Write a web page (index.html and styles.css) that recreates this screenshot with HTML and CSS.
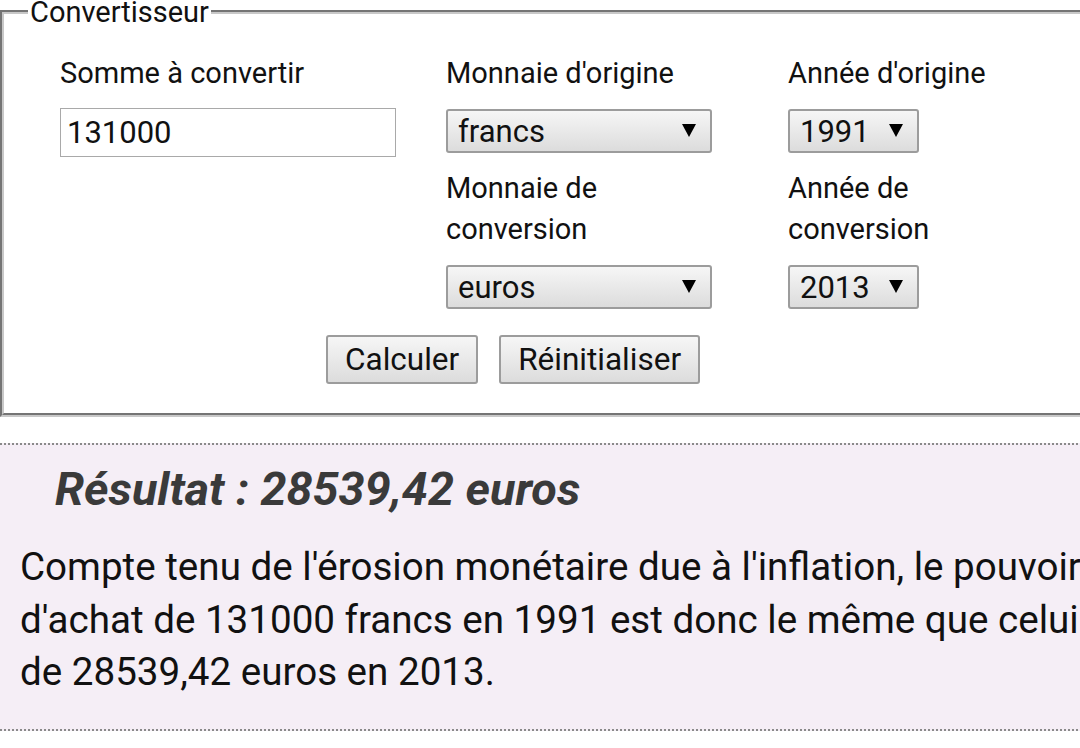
FILE: index.html
```html
<!DOCTYPE html>
<html lang="fr">
<head>
  <meta charset="UTF-8">
  <meta name="viewport" content="width=device-width, initial-scale=1.0">
  <title>Convertisseur</title>
  <link rel="stylesheet" href="styles.css">
</head>
<body>
  <div class="page">
    <form class="converter">
      <fieldset class="box">
        <legend>Convertisseur</legend>
        <div class="fields">
          <div class="col col-sum">
            <label for="somme">Somme à convertir</label>
            <input type="text" id="somme" value="131000">
          </div>
          <div class="col col-money">
            <label for="monnaieOrigine">Monnaie d'origine</label>
            <span class="select">
              <select id="monnaieOrigine">
                <option>francs</option>
                <option>euros</option>
              </select>
            </span>
            <label for="monnaieConversion">Monnaie de conversion</label>
            <span class="select">
              <select id="monnaieConversion">
                <option>euros</option>
                <option>francs</option>
              </select>
            </span>
          </div>
          <div class="col col-year">
            <label for="anneeOrigine">Année d'origine</label>
            <span class="select year">
              <select id="anneeOrigine">
                <option>1991</option>
              </select>
            </span>
            <label for="anneeConversion">Année de conversion</label>
            <span class="select year">
              <select id="anneeConversion">
                <option>2013</option>
              </select>
            </span>
          </div>
        </div>
        <div class="actions">
          <button type="button">Calculer</button>
          <button type="reset">Réinitialiser</button>
        </div>
      </fieldset>
    </form>

    <div class="result">
      <h3>Résultat : 28539,42 euros</h3>
      <p>Compte tenu de l'érosion monétaire due à l'inflation, le pouvoir d'achat de 131000 francs en 1991 est donc le même que celui de 28539,42 euros en 2013.</p>
    </div>
  </div>
</body>
</html>
```

FILE: styles.css
```css
:root {
  --text: #111111;
  --title: #3a3a3a;
  --line: #8a8a8a;
  --result-bg: #f5eef6;
}
* {
  margin: 0;
  padding: 0;
  box-sizing: border-box;
  font-family: Roboto, 'Noto Sans', sans-serif;
}
body {
  background: #ffffff;
  color: var(--text);
  overflow: hidden;
}
.page {
  width: 1130px;
}
.box {
  margin-top: -5px;
  border: 4px groove #c8c8c8;
  padding: 24px 0 29px 24px;
}
.box legend {
  font-size: 29px;
  padding: 0 2px;
}
.fields {
  display: grid;
  grid-template-columns: 336px 266px 240px;
  column-gap: 50px;
  margin-left: 32px;
}
.fields .col:last-child {
  margin-left: 26px;
}
.col {
  display: flex;
  flex-direction: column;
  align-items: flex-start;
}
.col label {
  font-size: 29px;
  line-height: 41px;
}
.col label + * {
  margin-top: 15px;
}
.col-sum input {
  width: 336px;
  height: 49px;
  margin-top: 14px;
  border: 1px solid #a9a9a9;
  padding: 0 6px;
  font-size: 31px;
  color: var(--text);
  outline: none;
}
.select {
  position: relative;
  display: block;
  width: 266px;
  margin-bottom: 15px;
}
.select.year {
  width: 131px;
}
/* petite fleche noire des listes */
.select::after {
  content: "";
  position: absolute;
  right: 16px;
  top: 15px;
  border-left: 7px solid transparent;
  border-right: 7px solid transparent;
  border-top: 13px solid #000;
  pointer-events: none;
}
.select select {
  appearance: none;
  -webkit-appearance: none;
  width: 100%;
  height: 44px;
  border: 2px solid #9c9c9c;
  border-radius: 3px;
  background: linear-gradient(#f6f6f6, #dcdcdc);
  padding: 0 10px;
  font-size: 31px;
  color: var(--text);
}
.actions {
  display: flex;
  gap: 21px;
  margin-top: 11px;
  padding-left: 298px;
}
.actions button {
  height: 49px;
  padding: 0 17px;
  border: 2px solid #9c9c9c;
  border-radius: 3px;
  background: linear-gradient(#f6f6f6, #dcdcdc);
  font-size: 31.5px;
  color: var(--text);
  cursor: pointer;
}
.result {
  width: 1130px;
  margin-top: 26px;
  background: var(--result-bg);
  border-top: 2px dotted var(--line);
  border-bottom: 2px dotted var(--line);
  padding: 17px 0 30px 20px;
}
.result h3 {
  font-size: 46.8px;
  line-height: 54px;
  font-weight: bold;
  font-style: italic;
  color: var(--title);
  margin-left: 35px;
}
.result p {
  font-size: 38.6px;
  line-height: 52.5px;
  margin-top: 25px;
}
```
